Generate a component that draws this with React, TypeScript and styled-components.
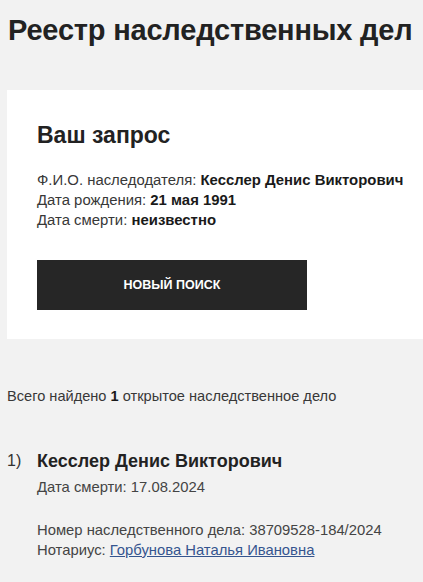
import styled, { createGlobalStyle } from 'styled-components';

const GlobalStyle = createGlobalStyle`
  html, body {
    margin: 0;
    padding: 0;
    background: #f2f2f2;
  }
  body {
    font-family: 'Liberation Sans', Arial, sans-serif;
    color: #222;
  }
`;

const Page = styled.div`
  padding: 12px 0 40px 7px;
  overflow: hidden;
`;

const Title = styled.h1`
  margin: 0 0 0 1px;
  font-size: 29px;
  line-height: 36px;
  font-weight: 700;
  color: #222;
  white-space: nowrap;
  letter-spacing: -0.2px;
`;

const Card = styled.section`
  margin-top: 42px;
  background: #fff;
  padding: 30px 30px 29px 30px;
  height: 249px;
  box-sizing: border-box;
`;

const CardTitle = styled.h2`
  margin: 0 0 20px;
  font-size: 23px;
  line-height: 30px;
  font-weight: 700;
  color: #222;
`;

const InfoLine = styled.div`
  font-size: 14.9px;
  line-height: 20px;
  color: #383838;
  white-space: nowrap;
  b {
    font-weight: 700;
    color: #1a1a1a;
  }
`;

const SearchButton = styled.button`
  display: flex;
  align-items: center;
  justify-content: center;
  width: 270px;
  height: 50px;
  margin-top: 30px;
  background: #262626;
  color: #fff;
  border: none;
  font-family: inherit;
  font-size: 12.5px;
  font-weight: 700;
  text-transform: uppercase;
`;

const Summary = styled.p`
  margin: 47px 0 0;
  font-size: 14.6px;
  line-height: 20px;
  color: #383838;
  b {
    color: #1a1a1a;
  }
`;

const ResultRow = styled.div`
  display: flex;
  margin-top: 42px;
`;

const ResultIndex = styled.div`
  width: 30px;
  font-size: 16px;
  line-height: 26px;
  color: #333;
`;

const ResultBody = styled.div`
  display: flex;
  flex-direction: column;
`;

const ResultName = styled.div`
  font-size: 18px;
  line-height: 26px;
  font-weight: 700;
  color: #222;
`;

const Detail = styled.div<{ $gap?: number }>`
  margin-top: ${(p) => p.$gap ?? 0}px;
  font-size: 14.8px;
  line-height: 20px;
  color: #444;
  white-space: nowrap;
`;

const NotaryLink = styled.a`
  color: #35558f;
  text-decoration: underline;
`;

export default function App() {
  return (
    <>
      <GlobalStyle />
      <Page>
        <Title>Реестр наследственных дел</Title>
        <Card>
          <CardTitle>Ваш запрос</CardTitle>
          <InfoLine>
            Ф.И.О. наследодателя: <b>Кесслер Денис Викторович</b>
          </InfoLine>
          <InfoLine>
            Дата рождения: <b>21 мая 1991</b>
          </InfoLine>
          <InfoLine>
            Дата смерти: <b>неизвестно</b>
          </InfoLine>
          <SearchButton>Новый поиск</SearchButton>
        </Card>
        <Summary>
          Всего найдено <b>1</b> открытое наследственное дело
        </Summary>
        <ResultRow>
          <ResultIndex>1)</ResultIndex>
          <ResultBody>
            <ResultName>Кесслер Денис Викторович</ResultName>
            <Detail $gap={3}>Дата смерти: 17.08.2024</Detail>
            <Detail $gap={23}>Номер наследственного дела: 38709528-184/2024</Detail>
            <Detail>
              Нотариус: <NotaryLink href="#">Горбунова Наталья Ивановна</NotaryLink>
            </Detail>
          </ResultBody>
        </ResultRow>
      </Page>
    </>
  );
}
